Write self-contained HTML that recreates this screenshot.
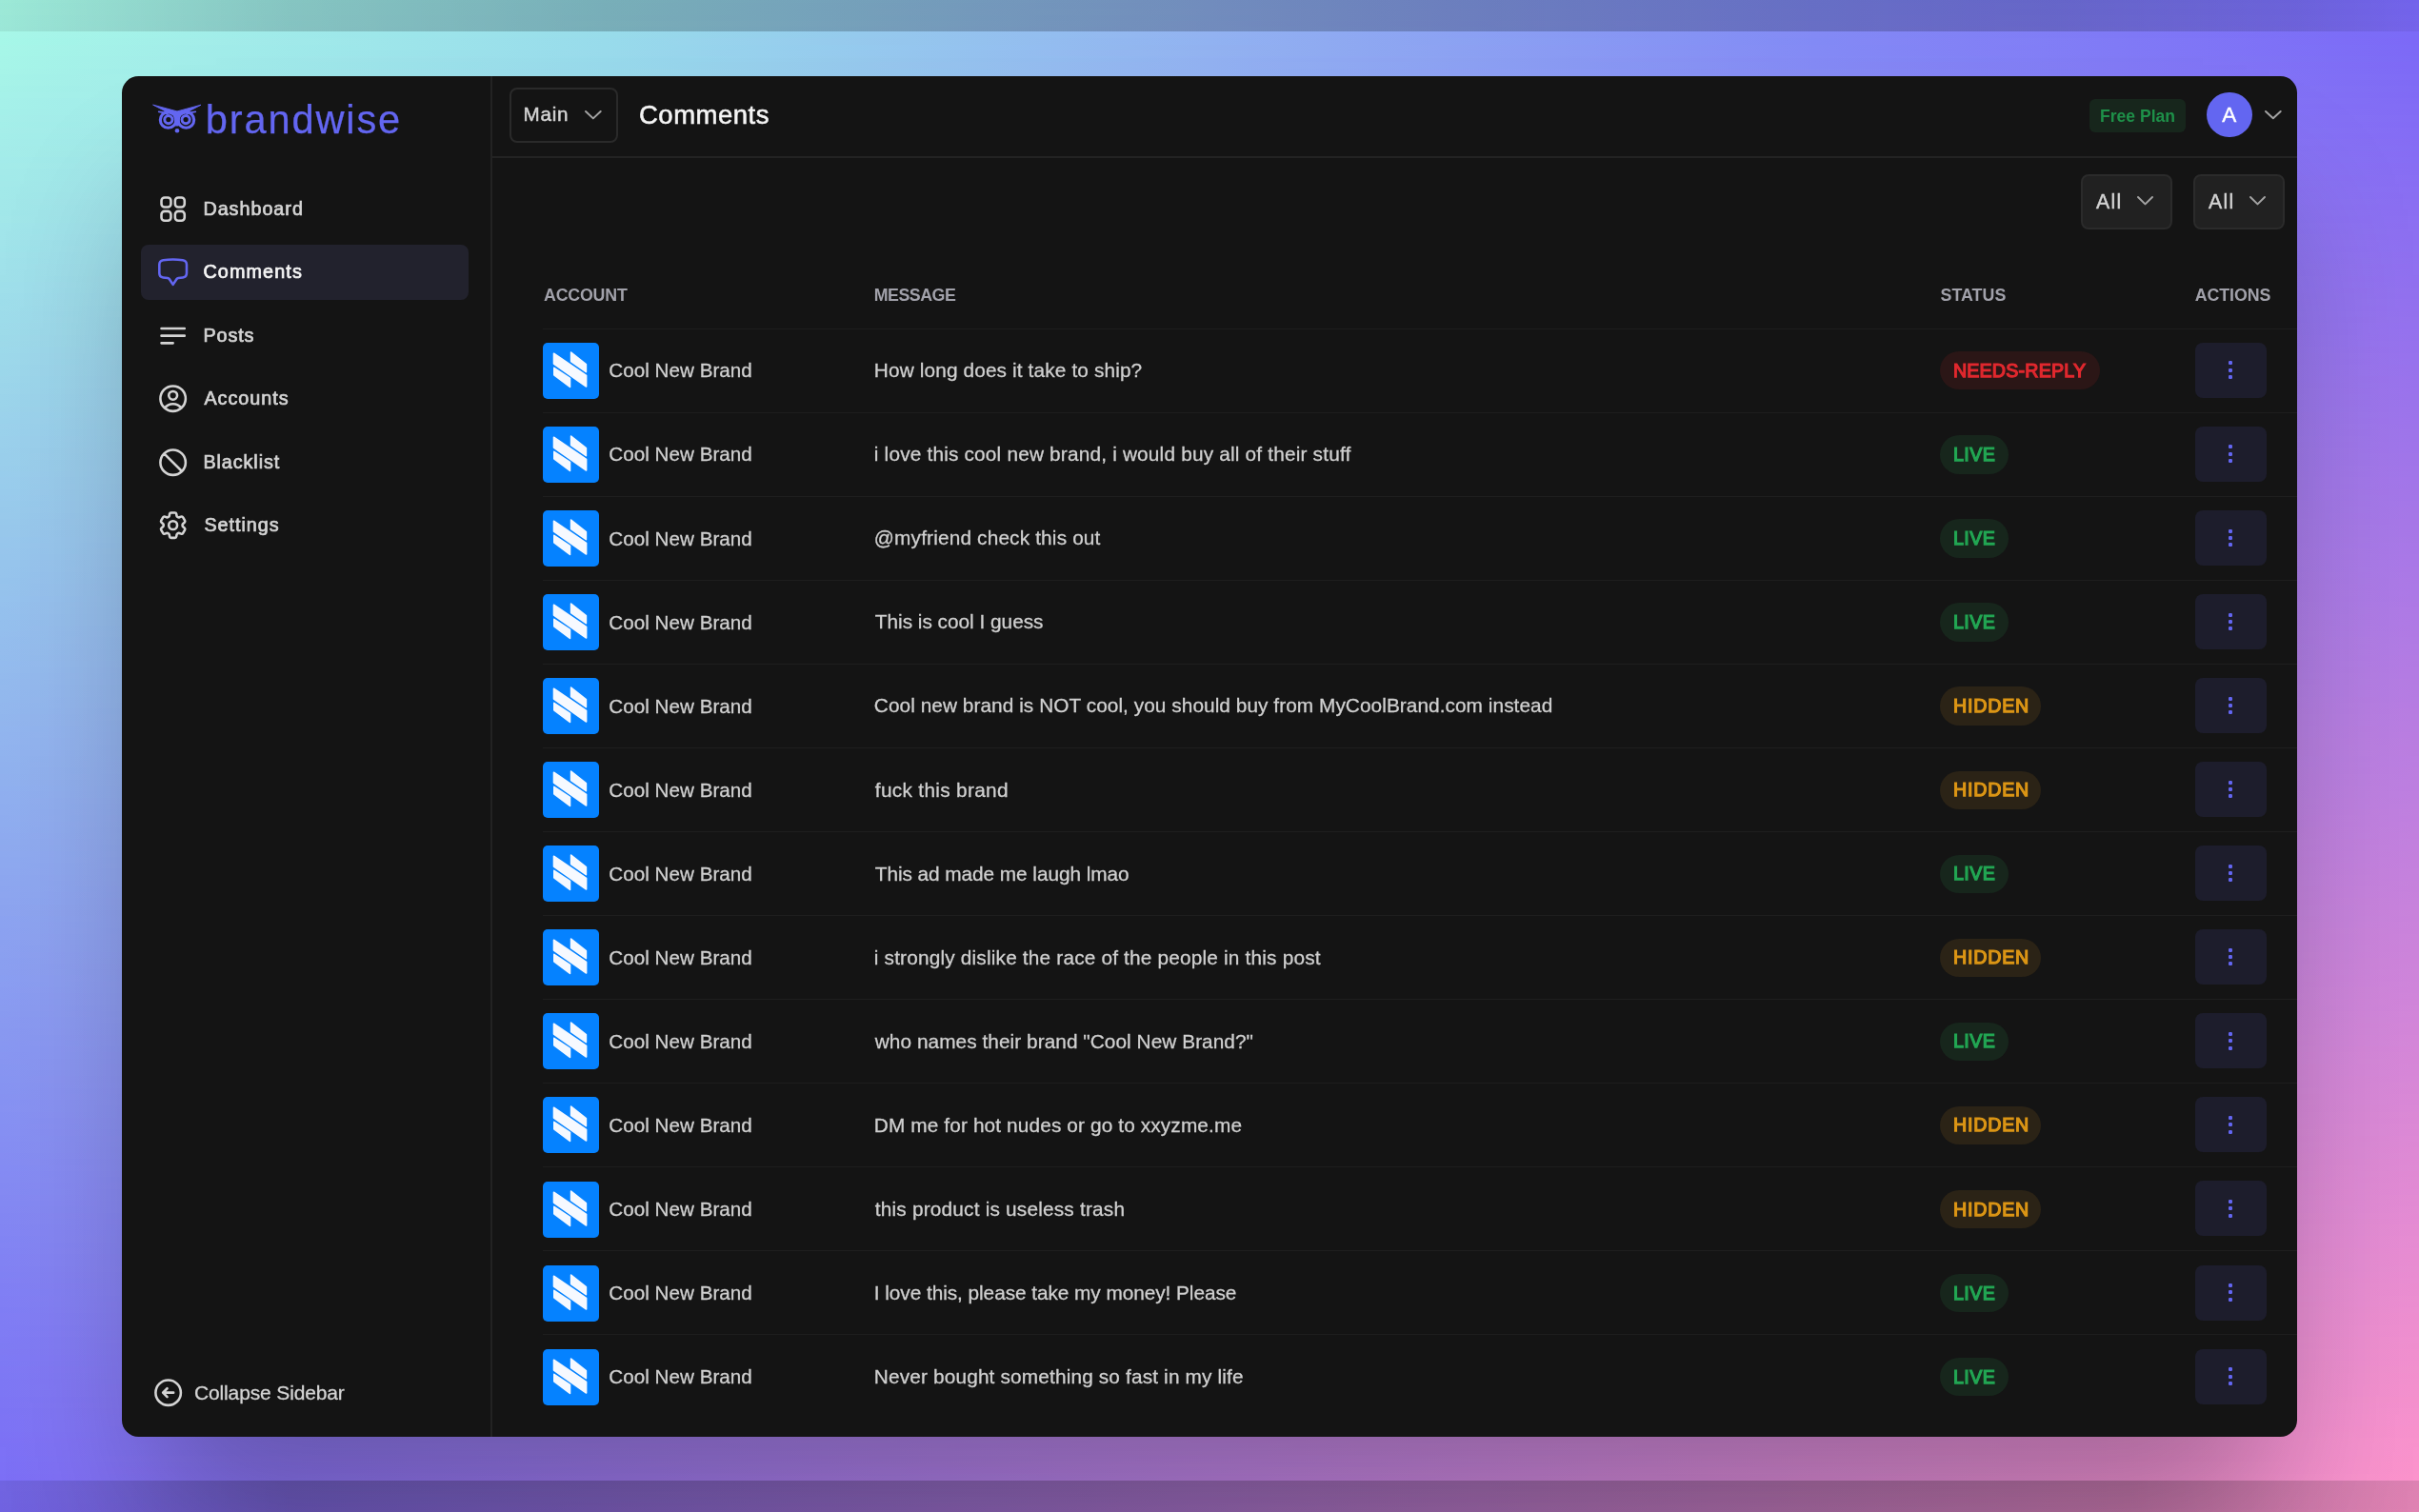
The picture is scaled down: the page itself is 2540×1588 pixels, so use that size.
<!DOCTYPE html><html lang="en"><head><meta charset="utf-8"><title>brandwise - Comments</title><style>
*{box-sizing:border-box;margin:0;padding:0}
html,body{width:2540px;height:1588px;overflow:hidden}
body{font-family:"Liberation Sans",sans-serif;position:relative;background:linear-gradient(90deg,#7b6cf7,#ff95cb)}
body:before{content:"";position:absolute;left:0;top:0;width:2540px;height:1588px;
 background:linear-gradient(90deg,#a8fbe7,#98deea 25%,#90b3f1 50%,#808af6 75%,#7868f8);
 -webkit-mask-image:linear-gradient(180deg,#000,transparent);mask-image:linear-gradient(180deg,#000,transparent)}
.band{position:absolute;left:0;width:2540px}
.abs{position:absolute}
.ic{position:absolute;overflow:visible}
.t{position:absolute;white-space:nowrap;line-height:1}
#ui{position:absolute;left:0;top:0;width:2540px;height:1588px;will-change:transform}
#card{position:absolute;left:128px;top:79.5px;width:2284px;height:1429px;border-radius:17.5px;background:#141414;
 box-shadow:0 110px 140px -30px rgba(0,0,0,.28);}
</style></head><body>
<div class="band" style="top:0;height:33px;background:linear-gradient(90deg,rgba(0,0,0,.07),rgba(0,0,0,.17) 12%,rgba(0,0,0,.21) 25%,rgba(0,0,0,.22) 60%,rgba(0,0,0,.19) 85%,rgba(0,0,0,.12) 95%,rgba(0,0,0,.05))"></div>
<div class="band" style="top:1554.5px;height:34px;background:linear-gradient(90deg,rgba(0,0,0,.09),rgba(0,0,0,.22) 12%,rgba(0,0,0,.22) 88%,rgba(0,0,0,.12))"></div>
<div id="card"></div>
<div id="ui">
<div class="abs" style="left:515px;top:80px;width:2px;height:1429px;background:#232323"></div>
<div class="abs" style="left:516px;top:164px;width:1896px;height:2px;background:#232323"></div>
<aside>
<svg class="ic" style="left:150px;top:95px;width:100px;height:55px" viewBox="150 95 100 55" fill="none" stroke="#6366f1" stroke-linecap="round">
<path d="M161.0 110.2 L186 116.9 L211 110.2 L201.5 115.2 L195.5 118.6 L186 122 L176.5 118.6 L170.5 115.2 Z M183 119 L189 119 L187.6 132 L184.4 132 Z" fill="#6366f1" stroke-width="0.9" stroke-linejoin="round"/>
<path d="M166.8 117.4 Q171.5 117.6 176 119.8 M205.2 117.4 Q200.5 117.6 196 119.8" stroke-width="1.9"/>
<circle cx="176.6" cy="126" r="8.3" stroke-width="3.1"/><circle cx="195.4" cy="126" r="8.3" stroke-width="3.1"/>
<circle cx="176.9" cy="125.6" r="4.1" stroke-width="3"/><circle cx="195.1" cy="125.6" r="4.1" stroke-width="3"/>
<circle cx="186" cy="137.3" r="2.3" fill="#6366f1" stroke="none"/>
</svg>
<div class="t" style="left:215.80px;top:104.99px;font-size:41.6px;color:#6366f1;letter-spacing:1.855px;-webkit-text-stroke:0.25px #6366f1">brandwise</div>
<nav>
<div class="abs" style="left:147.5px;top:256.5px;width:344.5px;height:58px;border-radius:8px;background:#22222d"></div>
<svg class="ic" style="left:164px;top:202.04999999999998px;width:35.3px;height:35.3px" viewBox="0 0 24 24" fill="none" stroke="#d4d4d4" stroke-width="1.75" stroke-linecap="round" stroke-linejoin="round"><path d="M3.75 6A2.25 2.25 0 0 1 6 3.75h2.25A2.25 2.25 0 0 1 10.5 6v2.25a2.25 2.25 0 0 1-2.25 2.25H6a2.25 2.25 0 0 1-2.25-2.25V6ZM3.75 15.75A2.25 2.25 0 0 1 6 13.5h2.25a2.25 2.25 0 0 1 2.25 2.25V18a2.25 2.25 0 0 1-2.25 2.25H6A2.25 2.25 0 0 1 3.75 18v-2.25ZM13.5 6a2.25 2.25 0 0 1 2.25-2.25H18A2.25 2.25 0 0 1 20.25 6v2.25A2.25 2.25 0 0 1 18 10.5h-2.25a2.25 2.25 0 0 1-2.25-2.25V6ZM13.5 15.75a2.25 2.25 0 0 1 2.25-2.25H18a2.25 2.25 0 0 1 2.25 2.25V18A2.25 2.25 0 0 1 18 20.25h-2.25A2.25 2.25 0 0 1 13.5 18v-2.25Z"/></svg>
<div class="t" style="left:213.40px;top:210.04px;font-size:19.8px;color:#d4d4d4;letter-spacing:0.966px;-webkit-text-stroke:0.7px #d4d4d4">Dashboard</div>
<svg class="ic" style="left:164px;top:268.45000000000005px;width:35.3px;height:35.3px" viewBox="0 0 24 24" fill="none" stroke="#6366f1" stroke-width="1.75" stroke-linecap="round" stroke-linejoin="round"><path d="M2.25 12.76c0 1.6 1.123 2.994 2.707 3.227 1.068.157 2.148.279 3.238.364.466.037.893.281 1.153.671L12 21l2.652-3.978c.26-.39.687-.634 1.153-.67 1.09-.086 2.17-.208 3.238-.365 1.584-.233 2.707-1.626 2.707-3.228V6.741c0-1.602-1.123-2.995-2.707-3.228A48.394 48.394 0 0 0 12 3c-2.392 0-4.744.175-7.043.513C3.373 3.746 2.25 5.14 2.25 6.741v6.018Z"/></svg>
<div class="t" style="left:213.40px;top:276.44px;font-size:19.8px;color:#f5f5f5;letter-spacing:1.108px;-webkit-text-stroke:0.7px #f5f5f5">Comments</div>
<svg class="ic" style="left:164px;top:334.95000000000005px;width:35.3px;height:35.3px" viewBox="0 0 24 24" fill="none" stroke="#d4d4d4" stroke-width="1.75" stroke-linecap="round" stroke-linejoin="round"><path d="M3.75 6.75h16.5M3.75 12h16.5m-16.5 5.25H12"/></svg>
<div class="t" style="left:213.40px;top:342.94px;font-size:19.8px;color:#d4d4d4;letter-spacing:0.905px;-webkit-text-stroke:0.7px #d4d4d4">Posts</div>
<svg class="ic" style="left:164px;top:401.35px;width:35.3px;height:35.3px" viewBox="0 0 24 24" fill="none" stroke="#d4d4d4" stroke-width="1.75" stroke-linecap="round" stroke-linejoin="round"><path d="M17.982 18.725A7.488 7.488 0 0 0 12 15.75a7.488 7.488 0 0 0-5.982 2.975m11.963 0a9 9 0 1 0-11.963 0m11.963 0A8.966 8.966 0 0 1 12 21a8.966 8.966 0 0 1-5.982-2.275M15 9.75a3 3 0 1 1-6 0 3 3 0 0 1 6 0Z"/></svg>
<div class="t" style="left:214.40px;top:409.34px;font-size:19.8px;color:#d4d4d4;letter-spacing:0.975px;-webkit-text-stroke:0.7px #d4d4d4">Accounts</div>
<svg class="ic" style="left:164px;top:467.75px;width:35.3px;height:35.3px" viewBox="0 0 24 24" fill="none" stroke="#d4d4d4" stroke-width="1.75" stroke-linecap="round" stroke-linejoin="round"><path d="M18.364 18.364A9 9 0 0 0 5.636 5.636m12.728 12.728A9 9 0 0 1 5.636 5.636m12.728 12.728L5.636 5.636"/></svg>
<div class="t" style="left:213.40px;top:475.74px;font-size:19.8px;color:#d4d4d4;letter-spacing:0.919px;-webkit-text-stroke:0.7px #d4d4d4">Blacklist</div>
<svg class="ic" style="left:164px;top:534.25px;width:35.3px;height:35.3px" viewBox="0 0 24 24" fill="none" stroke="#d4d4d4" stroke-width="1.75" stroke-linecap="round" stroke-linejoin="round"><path d="M9.594 3.94c.09-.542.56-.94 1.11-.94h2.593c.55 0 1.02.398 1.11.94l.213 1.281c.063.374.313.686.645.87.074.04.147.083.22.127.325.196.72.257 1.075.124l1.217-.456a1.125 1.125 0 0 1 1.37.49l1.296 2.247a1.125 1.125 0 0 1-.26 1.431l-1.003.827c-.293.241-.438.613-.43.992a7.723 7.723 0 0 1 0 .255c-.008.378.137.75.43.991l1.004.827c.424.35.534.955.26 1.43l-1.298 2.247a1.125 1.125 0 0 1-1.369.491l-1.217-.456c-.355-.133-.75-.072-1.076.124a6.47 6.47 0 0 1-.22.128c-.331.183-.581.495-.644.869l-.213 1.281c-.09.543-.56.94-1.11.94h-2.594c-.55 0-1.019-.398-1.11-.94l-.213-1.281c-.062-.374-.312-.686-.644-.87a6.52 6.52 0 0 1-.22-.127c-.325-.196-.72-.257-1.076-.124l-1.217.456a1.125 1.125 0 0 1-1.369-.49l-1.297-2.247a1.125 1.125 0 0 1 .26-1.431l1.004-.827c.292-.24.437-.613.43-.991a6.932 6.932 0 0 1 0-.255c.007-.38-.138-.751-.43-.992l-1.004-.827a1.125 1.125 0 0 1-.26-1.43l1.297-2.247a1.125 1.125 0 0 1 1.37-.491l1.216.456c.356.133.751.072 1.076-.124.072-.044.146-.086.22-.128.332-.183.582-.495.644-.869l.214-1.28Z"/><path d="M15 12a3 3 0 1 1-6 0 3 3 0 0 1 6 0Z"/></svg>
<div class="t" style="left:214.40px;top:542.24px;font-size:19.8px;color:#d4d4d4;letter-spacing:0.974px;-webkit-text-stroke:0.7px #d4d4d4">Settings</div>
</nav>
<svg class="ic" style="left:158.6px;top:1444.7px;width:35.3px;height:35.3px" viewBox="0 0 24 24" fill="none" stroke="#d4d4d4" stroke-width="1.75" stroke-linecap="round" stroke-linejoin="round"><path d="m11.25 9-3 3m0 0 3 3m-3-3h7.5M21 12a9 9 0 1 1-18 0 9 9 0 0 1 18 0Z"/></svg>
<div class="t" style="left:204.00px;top:1452.22px;font-size:21px;color:#d4d4d4;letter-spacing:-0.142px;-webkit-text-stroke:0.3px #d4d4d4">Collapse Sidebar</div>
</aside>
<header>
<div class="abs" style="left:535px;top:92px;width:114px;height:58px;border-radius:8px;border:2px solid #2a2a2a"></div>
<div class="t" style="left:549.60px;top:110.46px;font-size:20.6px;color:#d4d4d4;letter-spacing:0.772px;-webkit-text-stroke:0.5px #d4d4d4">Main</div>
<svg class="ic" style="left:611.8px;top:114px;width:21.7px;height:13.4px" viewBox="-2 -2 21.7 13.4" fill="none" stroke="#a3a3a3" stroke-width="2" stroke-linecap="round" stroke-linejoin="round"><path d="M1.0 1.0 L8.85 8.4 L16.7 1.0"/></svg>
<div class="t" style="left:671.00px;top:107.02px;font-size:27.5px;color:#f5f5f5;letter-spacing:0.500px;-webkit-text-stroke:0.55px #f5f5f5">Comments</div>
<div class="abs" style="left:2194px;top:104px;width:101px;height:35px;border-radius:6px;background:#17261c"></div>
<div class="t" style="left:2205.00px;top:113.59px;font-size:17.5px;color:#1e9049;font-weight:700;letter-spacing:0.026px">Free Plan</div>
<div class="abs" style="left:2317px;top:96.5px;width:47.5px;height:47.5px;border-radius:50%;background:#6366f1"></div>
<div class="t" style="left:2333.20px;top:110.05px;font-size:22.5px;color:#ffffff;-webkit-text-stroke:0.4px #ffffff">A</div>
<svg class="ic" style="left:2376px;top:113.9px;width:21.7px;height:13.2px" viewBox="-2 -2 21.7 13.2" fill="none" stroke="#a3a3a3" stroke-width="2" stroke-linecap="round" stroke-linejoin="round"><path d="M1.0 1.0 L8.85 8.2 L16.7 1.0"/></svg>
<div class="abs" style="left:2184.5px;top:182.5px;width:96.3px;height:58.5px;border-radius:8px;background:#212121;border:2px solid #2b2b2b"></div>
<div class="t" style="left:2200.90px;top:202.17px;font-size:21.3px;color:#d4d4d4;letter-spacing:1.282px;-webkit-text-stroke:0.45px #d4d4d4">All</div>
<svg class="ic" style="left:2242.2px;top:204.4px;width:21px;height:13.4px" viewBox="-2 -2 21 13.4" fill="none" stroke="#a3a3a3" stroke-width="2" stroke-linecap="round" stroke-linejoin="round"><path d="M1.0 1.0 L8.5 8.4 L16.0 1.0"/></svg>
<div class="abs" style="left:2302.7px;top:182.5px;width:96.3px;height:58.5px;border-radius:8px;background:#212121;border:2px solid #2b2b2b"></div>
<div class="t" style="left:2319.10px;top:202.17px;font-size:21.3px;color:#d4d4d4;letter-spacing:1.282px;-webkit-text-stroke:0.45px #d4d4d4">All</div>
<svg class="ic" style="left:2360.3999999999996px;top:204.4px;width:21px;height:13.4px" viewBox="-2 -2 21 13.4" fill="none" stroke="#a3a3a3" stroke-width="2" stroke-linecap="round" stroke-linejoin="round"><path d="M1.0 1.0 L8.5 8.4 L16.0 1.0"/></svg>
</header>
<main>
<div class="t" style="left:571.00px;top:301.53px;font-size:17.8px;color:#a1a1aa;font-weight:700;letter-spacing:-0.189px">ACCOUNT</div>
<div class="t" style="left:917.70px;top:301.53px;font-size:17.8px;color:#a1a1aa;font-weight:700;letter-spacing:-0.461px">MESSAGE</div>
<div class="t" style="left:2037.60px;top:301.53px;font-size:17.8px;color:#a1a1aa;font-weight:700;letter-spacing:0.035px">STATUS</div>
<div class="t" style="left:2304.80px;top:301.53px;font-size:17.8px;color:#a1a1aa;font-weight:700;letter-spacing:-0.093px">ACTIONS</div>
<section>
<div class="abs" style="left:570px;top:344.75px;width:1842px;height:1.5px;background:#1e1e1e"></div>
<div class="abs" style="left:570px;top:359.8px;width:59px;height:59px;border-radius:5px;background:#0582ff"></div>
<svg class="ic" style="left:570px;top:359.8px;width:59px;height:59px" viewBox="0 0 59 59" fill="#f6f9ff" stroke="#f6f9ff" stroke-width="1.6" stroke-linejoin="round"><path d="M11.5 11.2 L45.6 34.3 L45.6 46 L11.5 22Z"/><path d="M29.6 10 L45.4 22.7 L45.4 30.7 L29.6 19.6Z"/><path d="M11.8 26.4 L28.5 37.3 L28.5 46.4 L11.8 33.8Z"/></svg>
<div class="t" style="left:639.30px;top:379.36px;font-size:20.6px;color:#d0d0d0;letter-spacing:0.039px;-webkit-text-stroke:0.3px #d0d0d0">Cool New Brand</div>
<div class="t" style="left:917.80px;top:379.19px;font-size:20.8px;color:#d0d0d0;letter-spacing:0.135px;-webkit-text-stroke:0.3px #d0d0d0">How long does it take to ship?</div>
<div class="abs" style="left:2037px;top:369.1px;width:167.5px;height:40.4px;border-radius:20.2px;background:#2b1616"></div>
<div class="t" style="left:2050.90px;top:379.81px;font-size:19.6px;color:#e0282e;letter-spacing:0.224px;-webkit-text-stroke:1.25px #e0282e">NEEDS-REPLY</div>
<div class="abs" style="left:2304.5px;top:359.7px;width:75.5px;height:58px;border-radius:8px;background:#1d1d2c"></div>
<div class="abs" style="left:2340px;top:379px;width:4px;height:4px;border-radius:1.2px;background:#6366f1"></div>
<div class="abs" style="left:2340px;top:387px;width:4px;height:4px;border-radius:1.2px;background:#6366f1"></div>
<div class="abs" style="left:2340px;top:394px;width:4px;height:4px;border-radius:1.2px;background:#6366f1"></div>
</section>
<section>
<div class="abs" style="left:570px;top:432.75px;width:1842px;height:1.5px;background:#1e1e1e"></div>
<div class="abs" style="left:570px;top:447.9px;width:59px;height:59px;border-radius:5px;background:#0582ff"></div>
<svg class="ic" style="left:570px;top:447.9px;width:59px;height:59px" viewBox="0 0 59 59" fill="#f6f9ff" stroke="#f6f9ff" stroke-width="1.6" stroke-linejoin="round"><path d="M11.5 11.2 L45.6 34.3 L45.6 46 L11.5 22Z"/><path d="M29.6 10 L45.4 22.7 L45.4 30.7 L29.6 19.6Z"/><path d="M11.8 26.4 L28.5 37.3 L28.5 46.4 L11.8 33.8Z"/></svg>
<div class="t" style="left:639.30px;top:467.43px;font-size:20.6px;color:#d0d0d0;letter-spacing:0.039px;-webkit-text-stroke:0.3px #d0d0d0">Cool New Brand</div>
<div class="t" style="left:917.80px;top:467.26px;font-size:20.8px;color:#d0d0d0;letter-spacing:0.188px;-webkit-text-stroke:0.3px #d0d0d0">i love this cool new brand, i would buy all of their stuff</div>
<div class="abs" style="left:2037px;top:457.2px;width:72px;height:40.4px;border-radius:20.2px;background:#17261c"></div>
<div class="t" style="left:2050.90px;top:467.88px;font-size:19.6px;color:#22a653;letter-spacing:0.497px;-webkit-text-stroke:1.25px #22a653">LIVE</div>
<div class="abs" style="left:2304.5px;top:447.8px;width:75.5px;height:58px;border-radius:8px;background:#1d1d2c"></div>
<div class="abs" style="left:2340px;top:467px;width:4px;height:4px;border-radius:1.2px;background:#6366f1"></div>
<div class="abs" style="left:2340px;top:475px;width:4px;height:4px;border-radius:1.2px;background:#6366f1"></div>
<div class="abs" style="left:2340px;top:482px;width:4px;height:4px;border-radius:1.2px;background:#6366f1"></div>
</section>
<section>
<div class="abs" style="left:570px;top:520.75px;width:1842px;height:1.5px;background:#1e1e1e"></div>
<div class="abs" style="left:570px;top:535.9px;width:59px;height:59px;border-radius:5px;background:#0582ff"></div>
<svg class="ic" style="left:570px;top:535.9px;width:59px;height:59px" viewBox="0 0 59 59" fill="#f6f9ff" stroke="#f6f9ff" stroke-width="1.6" stroke-linejoin="round"><path d="M11.5 11.2 L45.6 34.3 L45.6 46 L11.5 22Z"/><path d="M29.6 10 L45.4 22.7 L45.4 30.7 L29.6 19.6Z"/><path d="M11.8 26.4 L28.5 37.3 L28.5 46.4 L11.8 33.8Z"/></svg>
<div class="t" style="left:639.30px;top:555.50px;font-size:20.6px;color:#d0d0d0;letter-spacing:0.039px;-webkit-text-stroke:0.3px #d0d0d0">Cool New Brand</div>
<div class="t" style="left:917.80px;top:555.33px;font-size:20.8px;color:#d0d0d0;letter-spacing:0.165px;-webkit-text-stroke:0.3px #d0d0d0">@myfriend check this out</div>
<div class="abs" style="left:2037px;top:545.2px;width:72px;height:40.4px;border-radius:20.2px;background:#17261c"></div>
<div class="t" style="left:2050.90px;top:555.95px;font-size:19.6px;color:#22a653;letter-spacing:0.497px;-webkit-text-stroke:1.25px #22a653">LIVE</div>
<div class="abs" style="left:2304.5px;top:535.8px;width:75.5px;height:58px;border-radius:8px;background:#1d1d2c"></div>
<div class="abs" style="left:2340px;top:556px;width:4px;height:4px;border-radius:1.2px;background:#6366f1"></div>
<div class="abs" style="left:2340px;top:563px;width:4px;height:4px;border-radius:1.2px;background:#6366f1"></div>
<div class="abs" style="left:2340px;top:570px;width:4px;height:4px;border-radius:1.2px;background:#6366f1"></div>
</section>
<section>
<div class="abs" style="left:570px;top:608.75px;width:1842px;height:1.5px;background:#1e1e1e"></div>
<div class="abs" style="left:570px;top:624.0px;width:59px;height:59px;border-radius:5px;background:#0582ff"></div>
<svg class="ic" style="left:570px;top:624.0px;width:59px;height:59px" viewBox="0 0 59 59" fill="#f6f9ff" stroke="#f6f9ff" stroke-width="1.6" stroke-linejoin="round"><path d="M11.5 11.2 L45.6 34.3 L45.6 46 L11.5 22Z"/><path d="M29.6 10 L45.4 22.7 L45.4 30.7 L29.6 19.6Z"/><path d="M11.8 26.4 L28.5 37.3 L28.5 46.4 L11.8 33.8Z"/></svg>
<div class="t" style="left:639.30px;top:643.57px;font-size:20.6px;color:#d0d0d0;letter-spacing:0.039px;-webkit-text-stroke:0.3px #d0d0d0">Cool New Brand</div>
<div class="t" style="left:918.80px;top:643.40px;font-size:20.8px;color:#d0d0d0;letter-spacing:-0.008px;-webkit-text-stroke:0.3px #d0d0d0">This is cool I guess</div>
<div class="abs" style="left:2037px;top:633.3px;width:72px;height:40.4px;border-radius:20.2px;background:#17261c"></div>
<div class="t" style="left:2050.90px;top:644.02px;font-size:19.6px;color:#22a653;letter-spacing:0.497px;-webkit-text-stroke:1.25px #22a653">LIVE</div>
<div class="abs" style="left:2304.5px;top:623.9px;width:75.5px;height:58px;border-radius:8px;background:#1d1d2c"></div>
<div class="abs" style="left:2340px;top:644px;width:4px;height:4px;border-radius:1.2px;background:#6366f1"></div>
<div class="abs" style="left:2340px;top:651px;width:4px;height:4px;border-radius:1.2px;background:#6366f1"></div>
<div class="abs" style="left:2340px;top:658px;width:4px;height:4px;border-radius:1.2px;background:#6366f1"></div>
</section>
<section>
<div class="abs" style="left:570px;top:696.75px;width:1842px;height:1.5px;background:#1e1e1e"></div>
<div class="abs" style="left:570px;top:712.1px;width:59px;height:59px;border-radius:5px;background:#0582ff"></div>
<svg class="ic" style="left:570px;top:712.1px;width:59px;height:59px" viewBox="0 0 59 59" fill="#f6f9ff" stroke="#f6f9ff" stroke-width="1.6" stroke-linejoin="round"><path d="M11.5 11.2 L45.6 34.3 L45.6 46 L11.5 22Z"/><path d="M29.6 10 L45.4 22.7 L45.4 30.7 L29.6 19.6Z"/><path d="M11.8 26.4 L28.5 37.3 L28.5 46.4 L11.8 33.8Z"/></svg>
<div class="t" style="left:639.30px;top:731.64px;font-size:20.6px;color:#d0d0d0;letter-spacing:0.039px;-webkit-text-stroke:0.3px #d0d0d0">Cool New Brand</div>
<div class="t" style="left:917.80px;top:731.47px;font-size:20.8px;color:#d0d0d0;letter-spacing:0.061px;-webkit-text-stroke:0.3px #d0d0d0">Cool new brand is NOT cool, you should buy from MyCoolBrand.com instead</div>
<div class="abs" style="left:2037px;top:721.4px;width:105.6px;height:40.4px;border-radius:20.2px;background:#2b2316"></div>
<div class="t" style="left:2050.90px;top:732.09px;font-size:19.6px;color:#db9515;letter-spacing:0.847px;-webkit-text-stroke:1.25px #db9515">HIDDEN</div>
<div class="abs" style="left:2304.5px;top:712.0px;width:75.5px;height:58px;border-radius:8px;background:#1d1d2c"></div>
<div class="abs" style="left:2340px;top:732px;width:4px;height:4px;border-radius:1.2px;background:#6366f1"></div>
<div class="abs" style="left:2340px;top:739px;width:4px;height:4px;border-radius:1.2px;background:#6366f1"></div>
<div class="abs" style="left:2340px;top:746px;width:4px;height:4px;border-radius:1.2px;background:#6366f1"></div>
</section>
<section>
<div class="abs" style="left:570px;top:784.75px;width:1842px;height:1.5px;background:#1e1e1e"></div>
<div class="abs" style="left:570px;top:800.2px;width:59px;height:59px;border-radius:5px;background:#0582ff"></div>
<svg class="ic" style="left:570px;top:800.2px;width:59px;height:59px" viewBox="0 0 59 59" fill="#f6f9ff" stroke="#f6f9ff" stroke-width="1.6" stroke-linejoin="round"><path d="M11.5 11.2 L45.6 34.3 L45.6 46 L11.5 22Z"/><path d="M29.6 10 L45.4 22.7 L45.4 30.7 L29.6 19.6Z"/><path d="M11.8 26.4 L28.5 37.3 L28.5 46.4 L11.8 33.8Z"/></svg>
<div class="t" style="left:639.30px;top:819.71px;font-size:20.6px;color:#d0d0d0;letter-spacing:0.039px;-webkit-text-stroke:0.3px #d0d0d0">Cool New Brand</div>
<div class="t" style="left:918.80px;top:819.54px;font-size:20.8px;color:#d0d0d0;letter-spacing:0.323px;-webkit-text-stroke:0.3px #d0d0d0">fuck this brand</div>
<div class="abs" style="left:2037px;top:809.5px;width:105.6px;height:40.4px;border-radius:20.2px;background:#2b2316"></div>
<div class="t" style="left:2050.90px;top:820.16px;font-size:19.6px;color:#db9515;letter-spacing:0.847px;-webkit-text-stroke:1.25px #db9515">HIDDEN</div>
<div class="abs" style="left:2304.5px;top:800.1px;width:75.5px;height:58px;border-radius:8px;background:#1d1d2c"></div>
<div class="abs" style="left:2340px;top:820px;width:4px;height:4px;border-radius:1.2px;background:#6366f1"></div>
<div class="abs" style="left:2340px;top:827px;width:4px;height:4px;border-radius:1.2px;background:#6366f1"></div>
<div class="abs" style="left:2340px;top:834px;width:4px;height:4px;border-radius:1.2px;background:#6366f1"></div>
</section>
<section>
<div class="abs" style="left:570px;top:872.75px;width:1842px;height:1.5px;background:#1e1e1e"></div>
<div class="abs" style="left:570px;top:888.2px;width:59px;height:59px;border-radius:5px;background:#0582ff"></div>
<svg class="ic" style="left:570px;top:888.2px;width:59px;height:59px" viewBox="0 0 59 59" fill="#f6f9ff" stroke="#f6f9ff" stroke-width="1.6" stroke-linejoin="round"><path d="M11.5 11.2 L45.6 34.3 L45.6 46 L11.5 22Z"/><path d="M29.6 10 L45.4 22.7 L45.4 30.7 L29.6 19.6Z"/><path d="M11.8 26.4 L28.5 37.3 L28.5 46.4 L11.8 33.8Z"/></svg>
<div class="t" style="left:639.30px;top:907.78px;font-size:20.6px;color:#d0d0d0;letter-spacing:0.039px;-webkit-text-stroke:0.3px #d0d0d0">Cool New Brand</div>
<div class="t" style="left:918.80px;top:907.61px;font-size:20.8px;color:#d0d0d0;letter-spacing:-0.057px;-webkit-text-stroke:0.3px #d0d0d0">This ad made me laugh lmao</div>
<div class="abs" style="left:2037px;top:897.5px;width:72px;height:40.4px;border-radius:20.2px;background:#17261c"></div>
<div class="t" style="left:2050.90px;top:908.23px;font-size:19.6px;color:#22a653;letter-spacing:0.497px;-webkit-text-stroke:1.25px #22a653">LIVE</div>
<div class="abs" style="left:2304.5px;top:888.1px;width:75.5px;height:58px;border-radius:8px;background:#1d1d2c"></div>
<div class="abs" style="left:2340px;top:908px;width:4px;height:4px;border-radius:1.2px;background:#6366f1"></div>
<div class="abs" style="left:2340px;top:915px;width:4px;height:4px;border-radius:1.2px;background:#6366f1"></div>
<div class="abs" style="left:2340px;top:922px;width:4px;height:4px;border-radius:1.2px;background:#6366f1"></div>
</section>
<section>
<div class="abs" style="left:570px;top:960.75px;width:1842px;height:1.5px;background:#1e1e1e"></div>
<div class="abs" style="left:570px;top:976.3px;width:59px;height:59px;border-radius:5px;background:#0582ff"></div>
<svg class="ic" style="left:570px;top:976.3px;width:59px;height:59px" viewBox="0 0 59 59" fill="#f6f9ff" stroke="#f6f9ff" stroke-width="1.6" stroke-linejoin="round"><path d="M11.5 11.2 L45.6 34.3 L45.6 46 L11.5 22Z"/><path d="M29.6 10 L45.4 22.7 L45.4 30.7 L29.6 19.6Z"/><path d="M11.8 26.4 L28.5 37.3 L28.5 46.4 L11.8 33.8Z"/></svg>
<div class="t" style="left:639.30px;top:995.85px;font-size:20.6px;color:#d0d0d0;letter-spacing:0.039px;-webkit-text-stroke:0.3px #d0d0d0">Cool New Brand</div>
<div class="t" style="left:917.80px;top:995.68px;font-size:20.8px;color:#d0d0d0;letter-spacing:0.184px;-webkit-text-stroke:0.3px #d0d0d0">i strongly dislike the race of the people in this post</div>
<div class="abs" style="left:2037px;top:985.6px;width:105.6px;height:40.4px;border-radius:20.2px;background:#2b2316"></div>
<div class="t" style="left:2050.90px;top:996.30px;font-size:19.6px;color:#db9515;letter-spacing:0.847px;-webkit-text-stroke:1.25px #db9515">HIDDEN</div>
<div class="abs" style="left:2304.5px;top:976.2px;width:75.5px;height:58px;border-radius:8px;background:#1d1d2c"></div>
<div class="abs" style="left:2340px;top:996px;width:4px;height:4px;border-radius:1.2px;background:#6366f1"></div>
<div class="abs" style="left:2340px;top:1003px;width:4px;height:4px;border-radius:1.2px;background:#6366f1"></div>
<div class="abs" style="left:2340px;top:1010px;width:4px;height:4px;border-radius:1.2px;background:#6366f1"></div>
</section>
<section>
<div class="abs" style="left:570px;top:1048.75px;width:1842px;height:1.5px;background:#1e1e1e"></div>
<div class="abs" style="left:570px;top:1064.4px;width:59px;height:59px;border-radius:5px;background:#0582ff"></div>
<svg class="ic" style="left:570px;top:1064.4px;width:59px;height:59px" viewBox="0 0 59 59" fill="#f6f9ff" stroke="#f6f9ff" stroke-width="1.6" stroke-linejoin="round"><path d="M11.5 11.2 L45.6 34.3 L45.6 46 L11.5 22Z"/><path d="M29.6 10 L45.4 22.7 L45.4 30.7 L29.6 19.6Z"/><path d="M11.8 26.4 L28.5 37.3 L28.5 46.4 L11.8 33.8Z"/></svg>
<div class="t" style="left:639.30px;top:1083.92px;font-size:20.6px;color:#d0d0d0;letter-spacing:0.039px;-webkit-text-stroke:0.3px #d0d0d0">Cool New Brand</div>
<div class="t" style="left:918.80px;top:1083.75px;font-size:20.8px;color:#d0d0d0;letter-spacing:0.055px;-webkit-text-stroke:0.3px #d0d0d0">who names their brand &quot;Cool New Brand?&quot;</div>
<div class="abs" style="left:2037px;top:1073.7px;width:72px;height:40.4px;border-radius:20.2px;background:#17261c"></div>
<div class="t" style="left:2050.90px;top:1084.37px;font-size:19.6px;color:#22a653;letter-spacing:0.497px;-webkit-text-stroke:1.25px #22a653">LIVE</div>
<div class="abs" style="left:2304.5px;top:1064.3px;width:75.5px;height:58px;border-radius:8px;background:#1d1d2c"></div>
<div class="abs" style="left:2340px;top:1084px;width:4px;height:4px;border-radius:1.2px;background:#6366f1"></div>
<div class="abs" style="left:2340px;top:1091px;width:4px;height:4px;border-radius:1.2px;background:#6366f1"></div>
<div class="abs" style="left:2340px;top:1099px;width:4px;height:4px;border-radius:1.2px;background:#6366f1"></div>
</section>
<section>
<div class="abs" style="left:570px;top:1136.75px;width:1842px;height:1.5px;background:#1e1e1e"></div>
<div class="abs" style="left:570px;top:1152.4px;width:59px;height:59px;border-radius:5px;background:#0582ff"></div>
<svg class="ic" style="left:570px;top:1152.4px;width:59px;height:59px" viewBox="0 0 59 59" fill="#f6f9ff" stroke="#f6f9ff" stroke-width="1.6" stroke-linejoin="round"><path d="M11.5 11.2 L45.6 34.3 L45.6 46 L11.5 22Z"/><path d="M29.6 10 L45.4 22.7 L45.4 30.7 L29.6 19.6Z"/><path d="M11.8 26.4 L28.5 37.3 L28.5 46.4 L11.8 33.8Z"/></svg>
<div class="t" style="left:639.30px;top:1171.99px;font-size:20.6px;color:#d0d0d0;letter-spacing:0.039px;-webkit-text-stroke:0.3px #d0d0d0">Cool New Brand</div>
<div class="t" style="left:917.80px;top:1171.82px;font-size:20.8px;color:#d0d0d0;letter-spacing:0.128px;-webkit-text-stroke:0.3px #d0d0d0">DM me for hot nudes or go to xxyzme.me</div>
<div class="abs" style="left:2037px;top:1161.7px;width:105.6px;height:40.4px;border-radius:20.2px;background:#2b2316"></div>
<div class="t" style="left:2050.90px;top:1172.44px;font-size:19.6px;color:#db9515;letter-spacing:0.847px;-webkit-text-stroke:1.25px #db9515">HIDDEN</div>
<div class="abs" style="left:2304.5px;top:1152.3px;width:75.5px;height:58px;border-radius:8px;background:#1d1d2c"></div>
<div class="abs" style="left:2340px;top:1172px;width:4px;height:4px;border-radius:1.2px;background:#6366f1"></div>
<div class="abs" style="left:2340px;top:1179px;width:4px;height:4px;border-radius:1.2px;background:#6366f1"></div>
<div class="abs" style="left:2340px;top:1187px;width:4px;height:4px;border-radius:1.2px;background:#6366f1"></div>
</section>
<section>
<div class="abs" style="left:570px;top:1224.75px;width:1842px;height:1.5px;background:#1e1e1e"></div>
<div class="abs" style="left:570px;top:1240.5px;width:59px;height:59px;border-radius:5px;background:#0582ff"></div>
<svg class="ic" style="left:570px;top:1240.5px;width:59px;height:59px" viewBox="0 0 59 59" fill="#f6f9ff" stroke="#f6f9ff" stroke-width="1.6" stroke-linejoin="round"><path d="M11.5 11.2 L45.6 34.3 L45.6 46 L11.5 22Z"/><path d="M29.6 10 L45.4 22.7 L45.4 30.7 L29.6 19.6Z"/><path d="M11.8 26.4 L28.5 37.3 L28.5 46.4 L11.8 33.8Z"/></svg>
<div class="t" style="left:639.30px;top:1260.06px;font-size:20.6px;color:#d0d0d0;letter-spacing:0.039px;-webkit-text-stroke:0.3px #d0d0d0">Cool New Brand</div>
<div class="t" style="left:918.80px;top:1259.89px;font-size:20.8px;color:#d0d0d0;letter-spacing:0.198px;-webkit-text-stroke:0.3px #d0d0d0">this product is useless trash</div>
<div class="abs" style="left:2037px;top:1249.8px;width:105.6px;height:40.4px;border-radius:20.2px;background:#2b2316"></div>
<div class="t" style="left:2050.90px;top:1260.51px;font-size:19.6px;color:#db9515;letter-spacing:0.847px;-webkit-text-stroke:1.25px #db9515">HIDDEN</div>
<div class="abs" style="left:2304.5px;top:1240.4px;width:75.5px;height:58px;border-radius:8px;background:#1d1d2c"></div>
<div class="abs" style="left:2340px;top:1260px;width:4px;height:4px;border-radius:1.2px;background:#6366f1"></div>
<div class="abs" style="left:2340px;top:1267px;width:4px;height:4px;border-radius:1.2px;background:#6366f1"></div>
<div class="abs" style="left:2340px;top:1275px;width:4px;height:4px;border-radius:1.2px;background:#6366f1"></div>
</section>
<section>
<div class="abs" style="left:570px;top:1312.75px;width:1842px;height:1.5px;background:#1e1e1e"></div>
<div class="abs" style="left:570px;top:1328.6px;width:59px;height:59px;border-radius:5px;background:#0582ff"></div>
<svg class="ic" style="left:570px;top:1328.6px;width:59px;height:59px" viewBox="0 0 59 59" fill="#f6f9ff" stroke="#f6f9ff" stroke-width="1.6" stroke-linejoin="round"><path d="M11.5 11.2 L45.6 34.3 L45.6 46 L11.5 22Z"/><path d="M29.6 10 L45.4 22.7 L45.4 30.7 L29.6 19.6Z"/><path d="M11.8 26.4 L28.5 37.3 L28.5 46.4 L11.8 33.8Z"/></svg>
<div class="t" style="left:639.30px;top:1348.13px;font-size:20.6px;color:#d0d0d0;letter-spacing:0.039px;-webkit-text-stroke:0.3px #d0d0d0">Cool New Brand</div>
<div class="t" style="left:917.80px;top:1347.96px;font-size:20.8px;color:#d0d0d0;letter-spacing:-0.051px;-webkit-text-stroke:0.3px #d0d0d0">I love this, please take my money! Please</div>
<div class="abs" style="left:2037px;top:1337.9px;width:72px;height:40.4px;border-radius:20.2px;background:#17261c"></div>
<div class="t" style="left:2050.90px;top:1348.58px;font-size:19.6px;color:#22a653;letter-spacing:0.497px;-webkit-text-stroke:1.25px #22a653">LIVE</div>
<div class="abs" style="left:2304.5px;top:1328.5px;width:75.5px;height:58px;border-radius:8px;background:#1d1d2c"></div>
<div class="abs" style="left:2340px;top:1348px;width:4px;height:4px;border-radius:1.2px;background:#6366f1"></div>
<div class="abs" style="left:2340px;top:1355px;width:4px;height:4px;border-radius:1.2px;background:#6366f1"></div>
<div class="abs" style="left:2340px;top:1363px;width:4px;height:4px;border-radius:1.2px;background:#6366f1"></div>
</section>
<section>
<div class="abs" style="left:570px;top:1400.75px;width:1842px;height:1.5px;background:#1e1e1e"></div>
<div class="abs" style="left:570px;top:1416.6px;width:59px;height:59px;border-radius:5px;background:#0582ff"></div>
<svg class="ic" style="left:570px;top:1416.6px;width:59px;height:59px" viewBox="0 0 59 59" fill="#f6f9ff" stroke="#f6f9ff" stroke-width="1.6" stroke-linejoin="round"><path d="M11.5 11.2 L45.6 34.3 L45.6 46 L11.5 22Z"/><path d="M29.6 10 L45.4 22.7 L45.4 30.7 L29.6 19.6Z"/><path d="M11.8 26.4 L28.5 37.3 L28.5 46.4 L11.8 33.8Z"/></svg>
<div class="t" style="left:639.30px;top:1436.20px;font-size:20.6px;color:#d0d0d0;letter-spacing:0.039px;-webkit-text-stroke:0.3px #d0d0d0">Cool New Brand</div>
<div class="t" style="left:917.80px;top:1436.03px;font-size:20.8px;color:#d0d0d0;letter-spacing:0.158px;-webkit-text-stroke:0.3px #d0d0d0">Never bought something so fast in my life</div>
<div class="abs" style="left:2037px;top:1425.9px;width:72px;height:40.4px;border-radius:20.2px;background:#17261c"></div>
<div class="t" style="left:2050.90px;top:1436.65px;font-size:19.6px;color:#22a653;letter-spacing:0.497px;-webkit-text-stroke:1.25px #22a653">LIVE</div>
<div class="abs" style="left:2304.5px;top:1416.5px;width:75.5px;height:58px;border-radius:8px;background:#1d1d2c"></div>
<div class="abs" style="left:2340px;top:1436px;width:4px;height:4px;border-radius:1.2px;background:#6366f1"></div>
<div class="abs" style="left:2340px;top:1444px;width:4px;height:4px;border-radius:1.2px;background:#6366f1"></div>
<div class="abs" style="left:2340px;top:1451px;width:4px;height:4px;border-radius:1.2px;background:#6366f1"></div>
</section>
</main>
</div>
</body></html>
